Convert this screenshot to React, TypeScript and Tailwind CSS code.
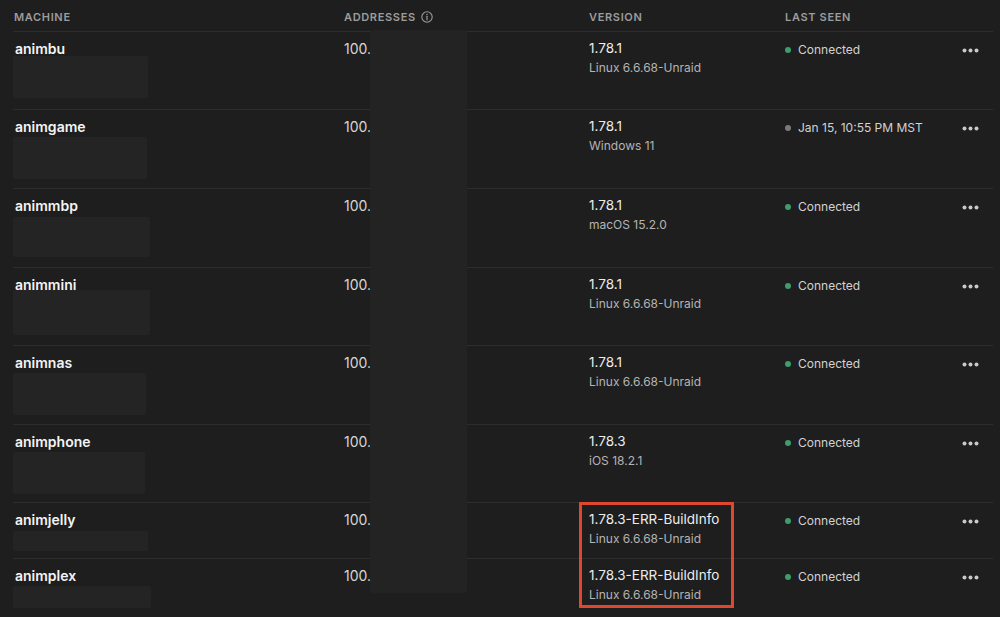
import React from "react";

type Machine = {
  name: string;
  boxW: number;
  boxTop: number;
  boxH: number;
  h: number;
  version: string;
  os: string;
  seen: string;
  online: boolean;
};

const machines: Machine[] = [
  { name: "animbu", boxW: 135, boxTop: 7, boxH: 42, h: 78, version: "1.78.1", os: "Linux 6.6.68-Unraid", seen: "Connected", online: true },
  { name: "animgame", boxW: 134, boxTop: 10, boxH: 42, h: 79, version: "1.78.1", os: "Windows 11", seen: "Jan 15, 10:55 PM MST", online: false },
  { name: "animmbp", boxW: 137, boxTop: 11, boxH: 40, h: 79, version: "1.78.1", os: "macOS 15.2.0", seen: "Connected", online: true },
  { name: "animmini", boxW: 137, boxTop: 5, boxH: 45, h: 78, version: "1.78.1", os: "Linux 6.6.68-Unraid", seen: "Connected", online: true },
  { name: "animnas", boxW: 133, boxTop: 10, boxH: 42, h: 79, version: "1.78.1", os: "Linux 6.6.68-Unraid", seen: "Connected", online: true },
  { name: "animphone", boxW: 132, boxTop: 10, boxH: 42, h: 78, version: "1.78.3", os: "iOS 18.2.1", seen: "Connected", online: true },
  { name: "animjelly", boxW: 135, boxTop: 11, boxH: 20, h: 56, version: "1.78.3-ERR-BuildInfo", os: "Linux 6.6.68-Unraid", seen: "Connected", online: true },
  { name: "animplex", boxW: 138, boxTop: 10, boxH: 22, h: 55, version: "1.78.3-ERR-BuildInfo", os: "Linux 6.6.68-Unraid", seen: "Connected", online: true },
];

const cols = "grid grid-cols-[331px_245px_196px_1fr_31px]";

function InfoIcon() {
  return (
    <svg width="12" height="12" viewBox="0 0 12 12" fill="none" className="ml-[5px]">
      <circle cx="6" cy="6" r="5.2" stroke="currentColor" strokeWidth="1.1" />
      <line x1="6" y1="5.3" x2="6" y2="8.8" stroke="currentColor" strokeWidth="1.2" strokeLinecap="round" />
      <circle cx="6" cy="3.6" r="0.75" fill="currentColor" />
    </svg>
  );
}

function Dots() {
  return (
    <svg width="17" height="5" viewBox="0 0 17 5" fill="#c9c9c9">
      <circle cx="2.5" cy="2.5" r="2" />
      <circle cx="8.5" cy="2.5" r="2" />
      <circle cx="14.5" cy="2.5" r="2" />
    </svg>
  );
}

export default function App() {
  return (
    <div
      className="relative w-[1000px] h-[617px] overflow-hidden bg-[#1e1e1f] text-[#e6e6e6]"
      style={{ fontFamily: "Inter, 'Noto Sans', sans-serif" }}
    >
      <div className="pl-[13px] pr-[7px]">
        {/* header */}
        <div className={`${cols} h-[31px] items-center text-[11px] font-semibold tracking-[0.06em] text-[#9c9c9c] uppercase`}>
          <div className="pl-[1px] pt-[3px]">Machine</div>
          <div className="flex items-center pt-[3px]">
            Addresses
            <InfoIcon />
          </div>
          <div className="pt-[3px]">Version</div>
          <div className="pt-[3px]">Last seen</div>
          <div />
        </div>

        {machines.map((m) => (
          <div
            key={m.name}
            className={`${cols} border-t border-[#2d2d2e]`}
            style={{ height: m.h }}
          >
            <div className="pt-[8px]">
              <div className="pl-[2px] text-[14px] leading-[17px] font-semibold text-[#f4f4f4]">{m.name}</div>
              <div
                className="rounded-[2px] bg-[#242425]"
                style={{ width: m.boxW, height: m.boxH, marginTop: m.boxTop - 8 }}
              />
            </div>
            <div className="pt-[8px] text-[14px] leading-[17px] text-[#d6d6d6]">100.</div>
            <div className="pt-[8px]">
              <div className="text-[13.5px] leading-[17px] text-[#ececec]">{m.version}</div>
              <div className="mt-[3px] text-[12px] leading-[16px] text-[#b4b4b4]">{m.os}</div>
            </div>
            <div className="pt-[7px] flex items-center h-[29px] text-[12px] text-[#d2d2d2]">
              <span
                className={`mr-[7px] h-[6px] w-[6px] rounded-full ${m.online ? "bg-[#3f9c6d]" : "bg-[#7a7a7a]"}`}
              />
              {m.seen}
            </div>
            <div className="pt-[7px] flex items-center h-[29px]">
              <Dots />
            </div>
          </div>
        ))}
      </div>

      {/* redacted address block */}
      <div className="absolute left-[370px] top-[30px] w-[97px] h-[563px] rounded-[2px] bg-[#232324]" />

      {/* highlight box */}
      <div className="absolute left-[579px] top-[502px] w-[155px] h-[106px] border-[3px] border-[#e0472f]" />
    </div>
  );
}
